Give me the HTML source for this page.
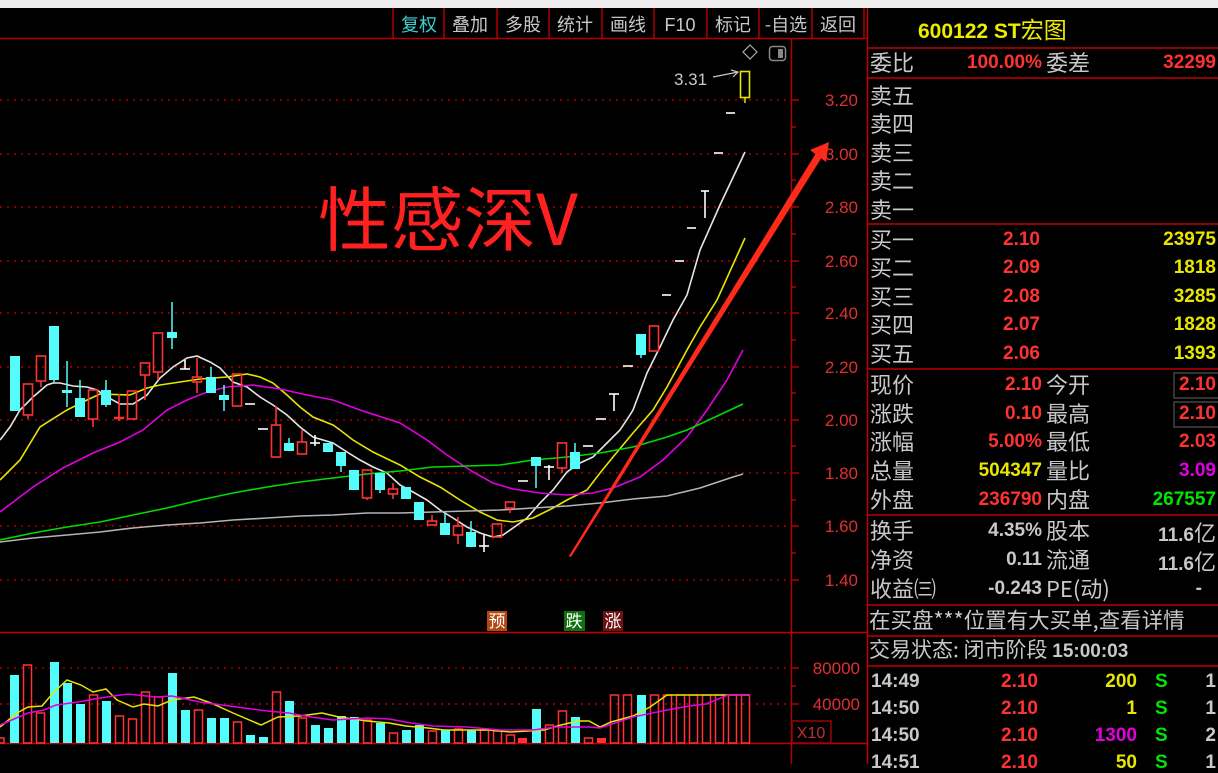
<!DOCTYPE html>
<html><head><meta charset="utf-8"><style>
*{margin:0;padding:0}
body{width:1218px;height:764px;background:#000;overflow:hidden;position:relative;font-family:"Liberation Sans","Noto Sans CJK SC",sans-serif}
svg{position:absolute;left:0;top:0}
.p{position:absolute;white-space:nowrap;line-height:1}
.l{color:#c8c8c8;font-size:22px;font-family:"Noto Sans CJK SC","WenQuanYi Zen Hei",sans-serif}
.n{font-size:19px;font-weight:bold}
.r{color:#ff3232}.y{color:#e6e600}.g{color:#00e600}.m{color:#e000e0}.w{color:#c8c8c8}
</style></head><body>
<svg width="1218" height="764" viewBox="0 0 1218 764" font-family="Liberation Sans, Noto Sans CJK SC, sans-serif">
<rect x="0" y="0" width="1218" height="8" fill="#eeeeee"/>
<g stroke="#b00000" stroke-width="1.5">
<line x1="0" y1="38.5" x2="868" y2="38.5"/>
<line x1="393" y1="8" x2="393" y2="38"/><line x1="444" y1="8" x2="444" y2="38"/><line x1="497" y1="8" x2="497" y2="38"/><line x1="549" y1="8" x2="549" y2="38"/><line x1="602" y1="8" x2="602" y2="38"/><line x1="654" y1="8" x2="654" y2="38"/><line x1="707" y1="8" x2="707" y2="38"/><line x1="759" y1="8" x2="759" y2="38"/><line x1="812" y1="8" x2="812" y2="38"/><line x1="864" y1="8" x2="864" y2="38"/>
</g>
<g font-size="18" fill="#c8c8c8" text-anchor="middle" font-family="Noto Sans CJK SC, sans-serif">
<text x="419" y="31" fill="#3cd2d2">复权</text><text x="470" y="31">叠加</text><text x="523" y="31">多股</text><text x="575" y="31">统计</text><text x="628" y="31">画线</text><text x="680" y="31" font-family="Liberation Sans">F10</text><text x="733" y="31">标记</text><text x="786" y="31">-自选</text><text x="838" y="31">返回</text>
</g>
<line x1="791.5" y1="38" x2="791.5" y2="764" stroke="#b00000" stroke-width="1.5"/>
<line x1="0" y1="632.5" x2="868" y2="632.5" stroke="#c00000" stroke-width="1.5"/>
<line x1="0" y1="743.5" x2="868" y2="743.5" stroke="#c00000" stroke-width="1.5"/>
<line x1="867.5" y1="8" x2="867.5" y2="764" stroke="#c00000" stroke-width="1.5"/>
<g stroke="#b00000" stroke-dasharray="2 5" stroke-width="1.5">
<line x1="0" y1="100" x2="790" y2="100"/><line x1="0" y1="154" x2="790" y2="154"/><line x1="0" y1="207" x2="790" y2="207"/><line x1="0" y1="261" x2="790" y2="261"/><line x1="0" y1="313" x2="790" y2="313"/><line x1="0" y1="367" x2="790" y2="367"/><line x1="0" y1="420" x2="790" y2="420"/><line x1="0" y1="473" x2="790" y2="473"/><line x1="0" y1="526" x2="790" y2="526"/><line x1="0" y1="580" x2="790" y2="580"/>
<line x1="0" y1="668" x2="790" y2="668"/><line x1="0" y1="704" x2="790" y2="704"/>
</g>
<g stroke="#b00000" stroke-width="1.5">
<line x1="792" y1="100" x2="799" y2="100"/><line x1="792" y1="127" x2="796" y2="127"/><line x1="792" y1="154" x2="799" y2="154"/><line x1="792" y1="180" x2="796" y2="180"/><line x1="792" y1="207" x2="799" y2="207"/><line x1="792" y1="234" x2="796" y2="234"/><line x1="792" y1="261" x2="799" y2="261"/><line x1="792" y1="287" x2="796" y2="287"/><line x1="792" y1="313" x2="799" y2="313"/><line x1="792" y1="340" x2="796" y2="340"/><line x1="792" y1="367" x2="799" y2="367"/><line x1="792" y1="393" x2="796" y2="393"/><line x1="792" y1="420" x2="799" y2="420"/><line x1="792" y1="446" x2="796" y2="446"/><line x1="792" y1="473" x2="799" y2="473"/><line x1="792" y1="500" x2="796" y2="500"/><line x1="792" y1="526" x2="799" y2="526"/><line x1="792" y1="553" x2="796" y2="553"/><line x1="792" y1="580" x2="799" y2="580"/>
<line x1="792" y1="668" x2="799" y2="668"/><line x1="792" y1="686" x2="796" y2="686"/><line x1="792" y1="704" x2="799" y2="704"/>
</g>
<g font-size="17" fill="#e03030" text-anchor="end">
<text x="858" y="106">3.20</text><text x="858" y="160">3.00</text><text x="858" y="213">2.80</text><text x="858" y="267">2.60</text><text x="858" y="319">2.40</text><text x="858" y="373">2.20</text><text x="858" y="426">2.00</text><text x="858" y="479">1.80</text><text x="858" y="532">1.60</text><text x="858" y="586">1.40</text>
<text x="860" y="674">80000</text><text x="860" y="710">40000</text>
</g>
<rect x="792" y="721" width="39" height="22" fill="none" stroke="#a00000" stroke-width="1.5"/>
<text x="811" y="738" font-size="16" fill="#c03030" text-anchor="middle">X10</text>
<path d="M750 45 L757 52 L750 59 L743 52 Z" fill="none" stroke="#aaa" stroke-width="1.2"/>
<rect x="769.5" y="46.5" width="16" height="14" rx="3" fill="none" stroke="#888" stroke-width="1.5"/>
<rect x="778" y="49" width="5" height="9" fill="#888"/>
<text x="674" y="85" font-size="17" fill="#c8c8c8">3.31</text>
<path d="M713 77 L738 72 M731 70 L738 72 L733 77" stroke="#c8c8c8" stroke-width="1.2" fill="none"/>
<g fill="none" stroke-width="1.6">
<polyline stroke="#e6e6e6" points="0,440 10,427 20,410 33,397 47,385 53,383 60,383 73,386 87,387 97,390 107,397 120,404 133,404 147,395 160,378 173,367 187,358 197,356 210,362 220,368 233,382 247,387 260,397 273,405 287,415 300,427 313,437 333,443 347,452 360,460 373,467 387,473 400,485 413,492 427,500 440,510 453,518 467,527 480,533 493,537 503,535 513,528 527,518 540,503 553,490 567,472 580,463 593,457 607,443 620,430 628,418 633,410 647,373 660,347 673,320 687,295 700,250 720,205 745,152"/>
<polyline stroke="#e6e600" points="0,480 20,460 40,427 67,410 87,400 100,394 130,395 147,388 160,385 180,382 200,379 227,377 247,374 260,377 273,383 287,395 300,407 313,417 333,425 340,430 353,440 373,452 400,465 420,477 440,487 460,500 480,512 497,520 513,522 533,518 553,508 567,500 587,490 600,473 613,457 633,433 653,410 667,387 687,350 700,327 717,300 745,238"/>
<polyline stroke="#e000e0" points="0,512 33,487 63,468 93,453 120,442 143,430 167,410 187,400 207,392 227,387 253,385 280,389 307,395 333,400 360,410 400,423 427,440 447,455 473,472 493,483 513,489 540,493 567,495 593,493 613,488 640,477 663,460 687,437 707,410 727,380 743,350"/>
<polyline stroke="#00dc00" points="0,540 33,533 67,527 100,522 133,515 167,508 200,500 233,493 267,487 300,482 333,478 367,474 400,471 433,467 467,466 500,465 533,460 567,457 600,453 633,447 667,437 687,430 713,418 743,404"/>
<polyline stroke="#b4b4b4" points="0,542 33,538 67,535 100,532 133,528 167,525 200,523 233,520 267,518 300,516 333,515 367,513 400,513 433,512 467,511 500,510 533,508 567,506 600,503 633,499 667,496 700,488 733,477 743,474"/>
</g>
<g fill="#54fcfc" stroke="none">
<rect x="10" y="356" width="10" height="55"/><rect x="49" y="326" width="10" height="54"/><rect x="62" y="390" width="10" height="3"/><rect x="75" y="398" width="10" height="19"/><rect x="101" y="390" width="10" height="15"/><rect x="167" y="332" width="10" height="6"/><rect x="206" y="377" width="10" height="16"/><rect x="219" y="395" width="10" height="5"/><rect x="284" y="443" width="10" height="8"/><rect x="323" y="443" width="10" height="9"/><rect x="336" y="452" width="10" height="14"/><rect x="349" y="470" width="10" height="20"/><rect x="375" y="473" width="10" height="17"/><rect x="401" y="487" width="10" height="12"/><rect x="414" y="502" width="10" height="18"/><rect x="440" y="523" width="10" height="12"/><rect x="466" y="532" width="10" height="15"/><rect x="531" y="457" width="10" height="9"/><rect x="570" y="452" width="10" height="17"/><rect x="636" y="334" width="10" height="21"/>
</g>
<g stroke="#54fcfc" stroke-width="1.5">
<line x1="54" y1="380" x2="54" y2="383"/><line x1="67" y1="361" x2="67" y2="407"/><line x1="80" y1="380" x2="80" y2="398"/><line x1="106" y1="380" x2="106" y2="407"/><line x1="172" y1="302" x2="172" y2="349"/><line x1="211" y1="367" x2="211" y2="377"/><line x1="224" y1="385" x2="224" y2="411"/><line x1="289" y1="438" x2="289" y2="443"/><line x1="341" y1="466" x2="341" y2="472"/><line x1="380" y1="490" x2="380" y2="493"/><line x1="445" y1="513" x2="445" y2="523"/><line x1="471" y1="521" x2="471" y2="532"/><line x1="536" y1="466" x2="536" y2="488"/><line x1="575" y1="443" x2="575" y2="452"/><line x1="641" y1="355" x2="641" y2="358"/>
</g>
<g fill="none" stroke="#ff3232" stroke-width="1.6">
<rect x="23.5" y="384" width="9" height="31"/><line x1="28" y1="415" x2="28" y2="419"/>
<rect x="36.5" y="356" width="9" height="25"/><line x1="41" y1="381" x2="41" y2="387"/>
<rect x="88.5" y="390" width="9" height="29"/><line x1="93" y1="419" x2="93" y2="427"/>
<line x1="114" y1="418" x2="124" y2="418" stroke-width="2.5"/><line x1="119" y1="394" x2="119" y2="421"/>
<rect x="127.5" y="391" width="9" height="28"/>
<rect x="140.5" y="363" width="9" height="12"/><line x1="145" y1="375" x2="145" y2="400"/>
<rect x="153.5" y="333" width="9" height="39"/><line x1="158" y1="372" x2="158" y2="380"/>
<rect x="192.5" y="377" width="9" height="5"/><line x1="197" y1="358" x2="197" y2="377"/><line x1="197" y1="382" x2="197" y2="393"/>
<rect x="232.5" y="374" width="9" height="32"/>
<rect x="271.5" y="425" width="9" height="32"/><line x1="276" y1="406" x2="276" y2="425"/>
<rect x="297.5" y="442" width="9" height="12"/><line x1="302" y1="430" x2="302" y2="442"/>
<rect x="362.5" y="470" width="9" height="28"/><line x1="367" y1="498" x2="367" y2="500"/>
<rect x="388.5" y="489" width="9" height="5"/><line x1="393" y1="483" x2="393" y2="489"/><line x1="393" y1="494" x2="393" y2="499"/>
<rect x="427.5" y="521" width="9" height="4"/><line x1="432" y1="515" x2="432" y2="521"/>
<rect x="453.5" y="526" width="9" height="9"/><line x1="458" y1="517" x2="458" y2="526"/><line x1="458" y1="535" x2="458" y2="544"/>
<rect x="492.5" y="524" width="9" height="13"/>
<rect x="505.5" y="502" width="9" height="6"/><line x1="510" y1="508" x2="510" y2="513"/>
<rect x="557.5" y="443" width="9" height="25"/><line x1="562" y1="468" x2="562" y2="473"/>
<rect x="649.5" y="326" width="9" height="25"/>
</g>
<g stroke="#ffffff" stroke-width="1.6">
<line x1="180" y1="369" x2="190" y2="369"/><line x1="185" y1="360" x2="185" y2="369"/>
<line x1="245" y1="404" x2="255" y2="404"/><line x1="258" y1="429" x2="268" y2="429"/>
<line x1="310" y1="443" x2="320" y2="443"/><line x1="315" y1="435" x2="315" y2="446"/>
<line x1="479" y1="546" x2="489" y2="546"/><line x1="484" y1="535" x2="484" y2="552"/>
<line x1="518" y1="481" x2="528" y2="481"/>
<line x1="544" y1="467" x2="554" y2="467"/><line x1="549" y1="465" x2="549" y2="480"/>
<line x1="583" y1="446" x2="593" y2="446"/><line x1="596" y1="419" x2="606" y2="419"/>
<line x1="609" y1="394" x2="619" y2="394"/><line x1="614" y1="394" x2="614" y2="411"/>
<line x1="623" y1="366" x2="633" y2="366"/>
<line x1="662" y1="295" x2="671" y2="295"/><line x1="675" y1="261" x2="684" y2="261"/><line x1="687" y1="228" x2="696" y2="228"/>
<line x1="701" y1="191" x2="709" y2="191"/><line x1="705" y1="191" x2="705" y2="218"/>
<line x1="714" y1="153" x2="723" y2="153"/><line x1="726" y1="113" x2="735" y2="113"/>
</g>
<rect x="740.5" y="71.5" width="9" height="26" fill="none" stroke="#e6e600" stroke-width="1.6"/>
<line x1="745" y1="97" x2="745" y2="103" stroke="#e6e600" stroke-width="1.5"/>
<polygon points="569,556 571,557 822,157 816,153" fill="#ff2a1a"/>
<polygon points="829,142 810,150 826,162" fill="#ff2a1a"/>
<text x="318" y="245" font-size="70" fill="#ff2020" font-family="Noto Sans CJK SC, sans-serif" textLength="260" lengthAdjust="spacingAndGlyphs">性感深V</text>
<rect x="487" y="611" width="20" height="20" fill="#b04810"/><text x="497" y="627" font-size="17" fill="#fff" text-anchor="middle" font-family="Noto Sans CJK SC,sans-serif">预</text>
<rect x="564" y="611" width="21" height="20" fill="#107010"/><text x="574" y="627" font-size="17" fill="#fff" text-anchor="middle" font-family="Noto Sans CJK SC,sans-serif">跌</text>
<rect x="603" y="611" width="20" height="20" fill="#701010"/><text x="613" y="627" font-size="17" fill="#fff" text-anchor="middle" font-family="Noto Sans CJK SC,sans-serif">涨</text>
<g fill="#54fcfc">
<rect x="10" y="675" width="9" height="68"/><rect x="50" y="662" width="9" height="81"/><rect x="63" y="683" width="9" height="60"/><rect x="76" y="704" width="9" height="39"/><rect x="102" y="701" width="9" height="42"/><rect x="168" y="673" width="9" height="70"/><rect x="181" y="710" width="9" height="33"/><rect x="207" y="718" width="9" height="25"/><rect x="220" y="718" width="9" height="25"/><rect x="246" y="735" width="9" height="8"/><rect x="259" y="737" width="9" height="6"/><rect x="285" y="701" width="9" height="42"/><rect x="311" y="725" width="9" height="18"/><rect x="324" y="728" width="9" height="15"/><rect x="337" y="716" width="9" height="27"/><rect x="350" y="717" width="9" height="26"/><rect x="376" y="723" width="9" height="20"/><rect x="402" y="730" width="9" height="13"/><rect x="415" y="725" width="9" height="18"/><rect x="441" y="730" width="9" height="13"/><rect x="467" y="730" width="9" height="13"/><rect x="532" y="709" width="9" height="34"/><rect x="571" y="717" width="9" height="26"/><rect x="637" y="695" width="9" height="48"/>
</g>
<g fill="none" stroke="#ff3232" stroke-width="1.5">
<rect x="-4" y="738" width="8" height="5"/>
<rect x="23.5" y="665" width="8" height="78"/><rect x="36.5" y="713" width="8" height="30"/><rect x="89.5" y="695" width="8" height="48"/><rect x="115.5" y="716" width="8" height="27"/><rect x="128.5" y="719" width="8" height="24"/><rect x="141.5" y="692" width="8" height="51"/><rect x="154.5" y="697" width="8" height="46"/><rect x="194.5" y="710" width="8" height="33"/><rect x="233.5" y="722" width="8" height="21"/><rect x="272.5" y="692" width="8" height="51"/><rect x="298.5" y="718" width="8" height="25"/><rect x="363.5" y="720" width="8" height="23"/><rect x="389.5" y="733" width="8" height="10"/><rect x="428.5" y="731" width="8" height="12"/><rect x="454.5" y="729" width="8" height="14"/><rect x="480.5" y="730" width="8" height="13"/><rect x="493.5" y="731" width="8" height="12"/><rect x="506.5" y="735" width="8" height="8"/><rect x="558.5" y="711" width="8" height="32"/><rect x="545.5" y="725" width="8" height="18"/><rect x="584.5" y="738" width="8" height="5"/>
<rect x="610.5" y="695" width="8" height="48"/><rect x="623.5" y="695" width="8" height="48"/><rect x="650.5" y="695" width="8" height="48"/><rect x="663.5" y="695" width="8" height="48"/><rect x="676.5" y="695" width="8" height="48"/><rect x="689.5" y="695" width="8" height="48"/><rect x="702.5" y="695" width="8" height="48"/><rect x="715.5" y="695" width="8" height="48"/><rect x="728.5" y="695" width="8" height="48"/><rect x="741.5" y="695" width="8" height="48"/>
</g>
<rect x="518" y="738" width="9" height="5" fill="#ff3232"/><rect x="597" y="738" width="9" height="5" fill="#ff3232"/>
<g fill="none" stroke-width="1.5">
<polyline stroke="#e6e600" points="0,727 17,713 28,707 42,706 53,693 67,680 81,685 93,692 106,689 117,700 133,707 144,704 158,706 172,700 194,697 211,703 233,713 261,725 278,717 300,716 322,713 339,717 367,721 389,723 406,726 428,728 444,730 489,730 511,732 544,730 561,725 578,721 589,721 600,727 611,722 633,716 650,707 667,695 750,695"/>
<polyline stroke="#e000e0" points="0,725 28,713 44,710 56,705 78,702 100,698 128,694 156,697 172,696 200,702 222,705 244,708 267,711 289,713 311,717 333,720 367,718 389,719 411,723 433,726 467,727 500,730 533,730 556,727 589,727 600,728 633,717 667,710 689,706 706,704 728,695 750,695"/>
</g>
<g stroke="#c00000" stroke-width="1.5">
<line x1="868" y1="48" x2="1218" y2="48"/><line x1="868" y1="78" x2="1218" y2="78"/><line x1="868" y1="224" x2="1218" y2="224"/><line x1="868" y1="369" x2="1218" y2="369"/><line x1="868" y1="515" x2="1218" y2="515"/><line x1="868" y1="605" x2="1218" y2="605"/><line x1="868" y1="636" x2="1218" y2="636"/><line x1="868" y1="666" x2="1218" y2="666"/>
</g>
<rect x="1174" y="373" width="45" height="25" fill="none" stroke="#444" stroke-width="1.5"/>
<rect x="1174" y="402" width="45" height="25" fill="none" stroke="#444" stroke-width="1.5"/>
</svg>
<div class="p" style="left:918px;top:17px;font-size:21px;font-weight:bold;color:#ecec00">600122 ST<span style="font-family:'Noto Sans CJK SC',sans-serif;font-weight:normal;font-size:23px">宏图</span></div>

<div class="p l" style="left:870px;top:51px">委比</div><div class="p n r" style="right:176px;top:53px">100.00%</div><div class="p l" style="left:1046px;top:51px">委差</div><div class="p n r" style="right:2px;top:53px">32299</div>

<div class="p l" style="left:870px;top:84px">卖五</div><div class="p l" style="left:870px;top:112px">卖四</div><div class="p l" style="left:870px;top:141px">卖三</div><div class="p l" style="left:870px;top:169px">卖二</div><div class="p l" style="left:870px;top:198px">卖一</div>

<div class="p l" style="left:870px;top:228px">买一</div><div class="p n r" style="right:178px;top:230px">2.10</div><div class="p n y" style="right:2px;top:230px">23975</div>
<div class="p l" style="left:870px;top:256px">买二</div><div class="p n r" style="right:178px;top:258px">2.09</div><div class="p n y" style="right:2px;top:258px">1818</div>
<div class="p l" style="left:870px;top:285px">买三</div><div class="p n r" style="right:178px;top:287px">2.08</div><div class="p n y" style="right:2px;top:287px">3285</div>
<div class="p l" style="left:870px;top:313px">买四</div><div class="p n r" style="right:178px;top:315px">2.07</div><div class="p n y" style="right:2px;top:315px">1828</div>
<div class="p l" style="left:870px;top:342px">买五</div><div class="p n r" style="right:178px;top:344px">2.06</div><div class="p n y" style="right:2px;top:344px">1393</div>

<div class="p l" style="left:870px;top:373px">现价</div><div class="p n r" style="right:176px;top:375px">2.10</div><div class="p l" style="left:1046px;top:373px">今开</div><div class="p n r" style="right:2px;top:375px">2.10</div>
<div class="p l" style="left:870px;top:402px">涨跌</div><div class="p n r" style="right:176px;top:404px">0.10</div><div class="p l" style="left:1046px;top:402px">最高</div><div class="p n r" style="right:2px;top:404px">2.10</div>
<div class="p l" style="left:870px;top:430px">涨幅</div><div class="p n r" style="right:176px;top:432px">5.00%</div><div class="p l" style="left:1046px;top:430px">最低</div><div class="p n r" style="right:2px;top:432px">2.03</div>
<div class="p l" style="left:870px;top:459px">总量</div><div class="p n y" style="right:176px;top:461px">504347</div><div class="p l" style="left:1046px;top:459px">量比</div><div class="p n m" style="right:2px;top:461px">3.09</div>
<div class="p l" style="left:870px;top:488px">外盘</div><div class="p n r" style="right:176px;top:490px">236790</div><div class="p l" style="left:1046px;top:488px">内盘</div><div class="p n g" style="right:2px;top:490px">267557</div>

<div class="p l" style="left:870px;top:519px">换手</div><div class="p n w" style="right:176px;top:521px">4.35%</div><div class="p l" style="left:1046px;top:519px">股本</div><div class="p n w" style="right:2px;top:521px">11.6<span style="font-family:'Noto Sans CJK SC';font-weight:normal;font-size:22px">亿</span></div>
<div class="p l" style="left:870px;top:548px">净资</div><div class="p n w" style="right:176px;top:550px">0.11</div><div class="p l" style="left:1046px;top:548px">流通</div><div class="p n w" style="right:2px;top:550px">11.6<span style="font-family:'Noto Sans CJK SC';font-weight:normal;font-size:22px">亿</span></div>
<div class="p l" style="left:870px;top:577px">收益㈢</div><div class="p n w" style="right:176px;top:579px">-0.243</div><div class="p l" style="left:1046px;top:577px">PE(动)</div><div class="p n w" style="right:16px;top:579px">-</div>

<div class="p l" style="left:869px;top:609px;font-size:21.5px">在买盘***位置有大买单,查看详情</div>
<div class="p l" style="left:869px;top:639px;font-size:21px">交易状态: 闭市阶段 <b style="font-family:'Liberation Sans';font-size:19px">15:00:03</b></div>

<div class="p n w" style="left:871px;top:672px">14:49</div><div class="p n r" style="right:180px;top:672px">2.10</div><div class="p n y" style="right:81px;top:672px">200</div><div class="p n g" style="left:1155px;top:672px">S</div><div class="p n w" style="right:2px;top:672px">1</div>
<div class="p n w" style="left:871px;top:699px">14:50</div><div class="p n r" style="right:180px;top:699px">2.10</div><div class="p n y" style="right:81px;top:699px">1</div><div class="p n g" style="left:1155px;top:699px">S</div><div class="p n w" style="right:2px;top:699px">1</div>
<div class="p n w" style="left:871px;top:726px">14:50</div><div class="p n r" style="right:180px;top:726px">2.10</div><div class="p n m" style="right:81px;top:726px">1300</div><div class="p n g" style="left:1155px;top:726px">S</div><div class="p n w" style="right:2px;top:726px">2</div>
<div class="p n w" style="left:871px;top:753px">14:51</div><div class="p n r" style="right:180px;top:753px">2.10</div><div class="p n y" style="right:81px;top:753px">50</div><div class="p n g" style="left:1155px;top:753px">S</div><div class="p n w" style="right:2px;top:753px">1</div>
</body></html>
